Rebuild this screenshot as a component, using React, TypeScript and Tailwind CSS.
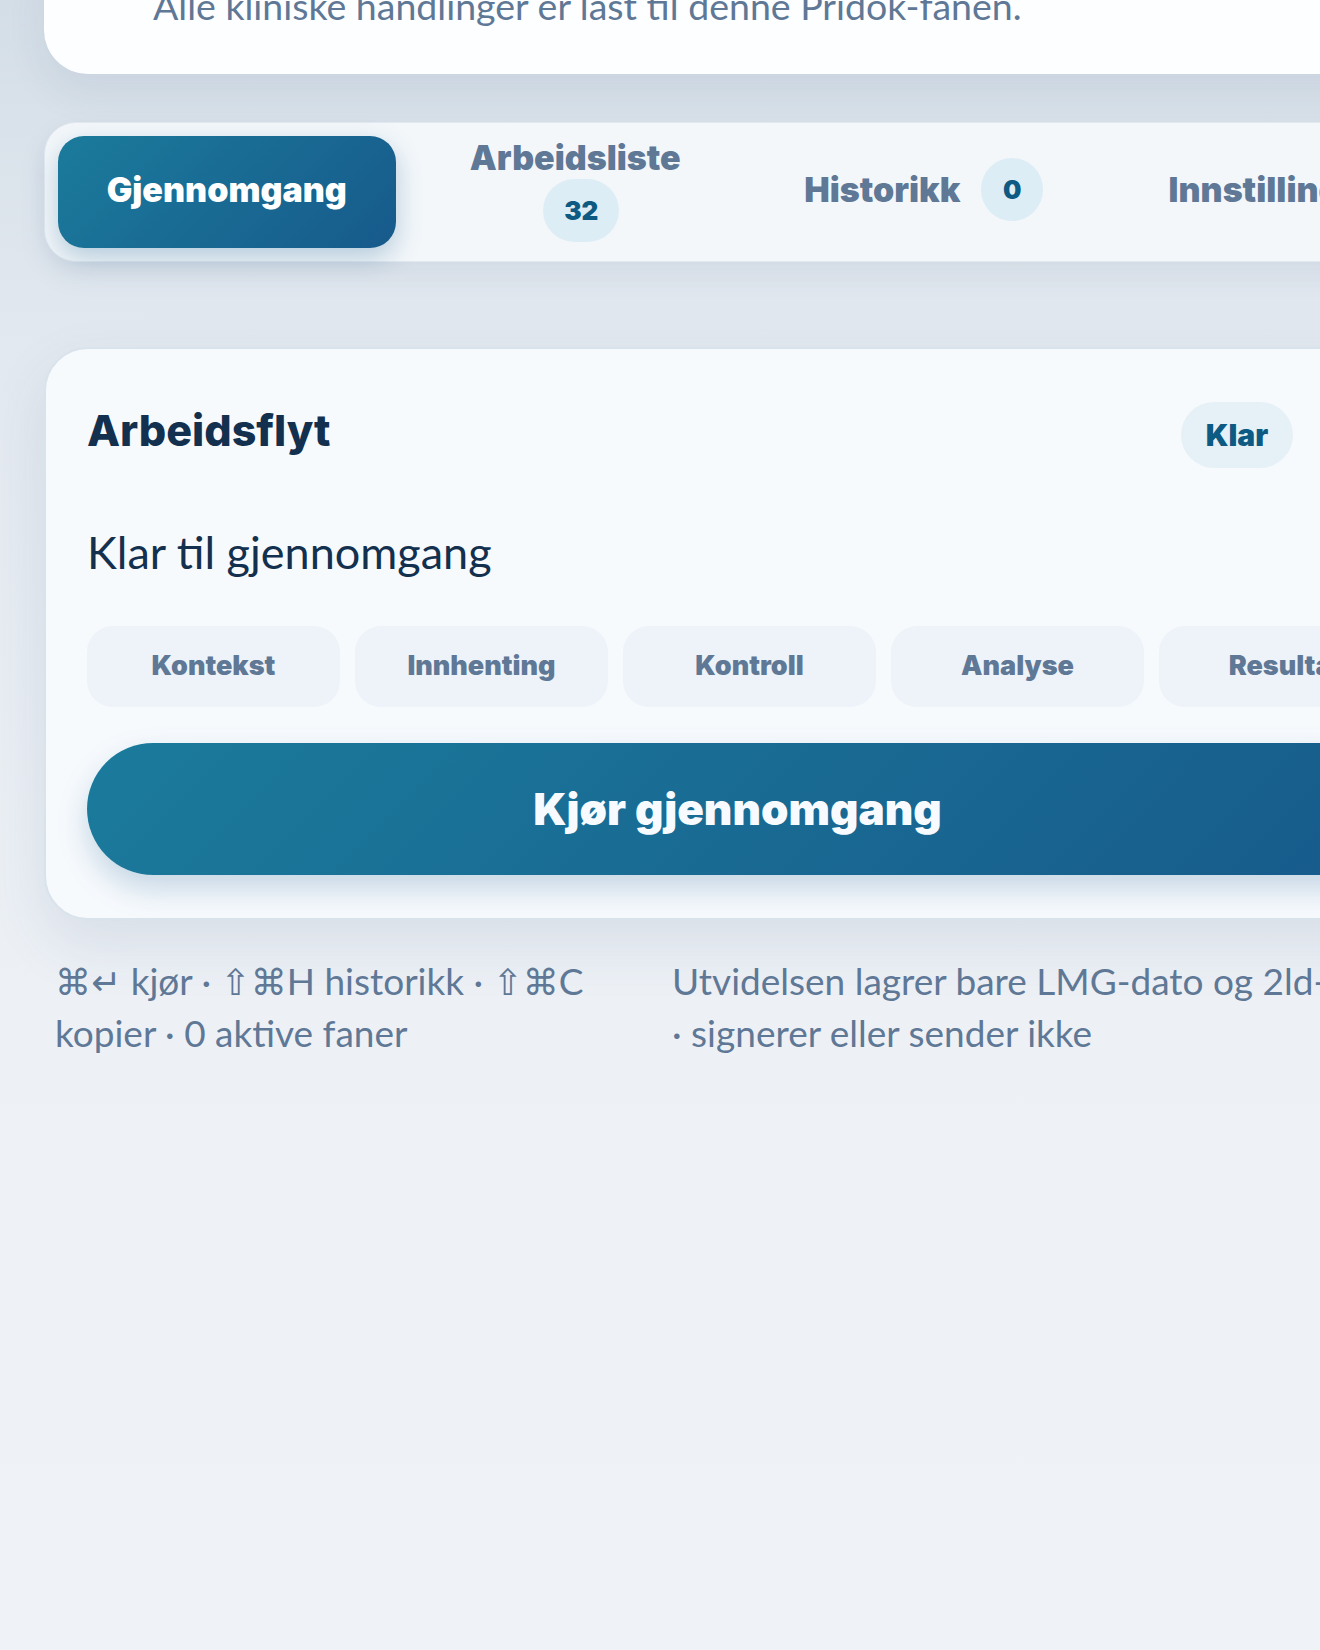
import type { ReactNode } from 'react'

const stages = ['Kontekst', 'Innhenting', 'Kontroll', 'Analyse', 'Resultat']

const heavy = "font-['Inter','Lato','Liberation_Sans',sans-serif] font-black"

function Badge({ children, className = '' }: { children: ReactNode; className?: string }) {
  return (
    <span
      className={`${heavy} inline-flex h-[63px] min-w-[62px] items-center justify-center rounded-full bg-[#ddedf5] px-[21px] text-[26px] text-[#0d5a82] ${className}`}
    >
      {children}
    </span>
  )
}

function Key({ children }: { children: ReactNode }) {
  return <span className="font-['DejaVu_Sans',sans-serif] text-[36px] leading-none">{children}</span>
}

export default function App() {
  return (
    <div className="min-h-[1650px] w-full overflow-hidden bg-[linear-gradient(180deg,#d4dee7_0px,#e3e9f0_360px,#edf1f6_1000px,#eff2f7_1650px)] font-['Lato','Liberation_Sans',sans-serif]">
      <div className="ml-[44px] w-[1411px]">
        {/* locked notice, scrolled mostly out of view */}
        <div className="-mt-[60px] rounded-[44px] bg-[#fdfeff] pt-[41px] pr-10 pb-[43px] pl-[109px] shadow-[0_18px_40px_rgba(40,70,110,0.08)]">
          <p className="text-[37.5px] leading-[50px] text-[#5f7896]">
            Alle kliniske handlinger er låst til denne Pridok-fanen.
          </p>
        </div>

        {/* tabs */}
        <nav className="mt-[48px] grid grid-cols-4 gap-[11px] rounded-[32px] border border-[#e2e9f0] bg-[#f3f7fa] p-[13px] shadow-[0_12px_30px_rgba(40,70,110,0.07)]">
          <button
            className={`${heavy} h-[112px] rounded-[26px] bg-[linear-gradient(135deg,#1b7b9c,#175a8b)] pb-[6px] text-[34px] text-white shadow-[0_10px_26px_rgba(23,90,139,0.28)]`}
          >
            Gjennomgang
          </button>
          <button className="flex h-[112px] flex-col items-center justify-center gap-[4px] pb-[2px]">
            <span className={`${heavy} text-[34px] leading-[34px] text-[#5f7896]`}>Arbeidsliste</span>
            <Badge className="ml-[12px]">32</Badge>
          </button>
          <button className="flex h-[112px] items-center justify-center gap-[21px] pb-[6px]">
            <span className={`${heavy} text-[34px] text-[#5f7896]`}>Historikk</span>
            <Badge className="px-0">0</Badge>
          </button>
          <button className={`${heavy} h-[112px] pb-[6px] text-[34px] text-[#5f7896]`}>Innstillinger</button>
        </nav>

        {/* workflow card */}
        <section className="mt-[85px] rounded-[44px] border-2 border-[#d9e3ec] bg-[#f7fafd] px-[41px] pt-[53px] pb-[43px] shadow-[0_24px_60px_rgba(40,70,110,0.10)]">
          <div className="flex h-[66px] items-center justify-between pr-[119px]">
            <h2 className={`${heavy} mb-[10px] !font-extrabold text-[43px] leading-none text-[#13304f]`}>Arbeidsflyt</h2>
            <span
              className={`${heavy} inline-flex h-[66px] w-[112px] items-center justify-center rounded-full bg-[#e5f1f7] text-[30px] text-[#0d5a82]`}
            >
              Klar
            </span>
          </div>

          <p className="mt-[59px] text-[45px] leading-[50px] text-[#13304f]">Klar til gjennomgang</p>

          <div className="mt-[49px] grid grid-cols-5 gap-[15px]">
            {stages.map((s) => (
              <div
                key={s}
                className={`${heavy} flex h-[81px] items-center justify-center rounded-[26px] bg-[#eef3f9] text-[27px] text-[#5f7896]`}
              >
                {s}
              </div>
            ))}
          </div>

          <button
            className={`${heavy} mt-[36px] flex h-[132px] w-full items-center justify-center rounded-full bg-[linear-gradient(135deg,#1b7b9c,#175a8b)] pr-[24px] text-[44px] text-[#f7fbff] shadow-[0_14px_30px_rgba(23,90,139,0.22)]`}
          >
            Kjør gjennomgang
          </button>
        </section>

        {/* footer hints */}
        <footer className="mt-[35px] grid grid-cols-[585px_1fr] gap-8 pl-[11px] text-[37px] leading-[52px] text-[#5f7896]">
          <p>
            <Key>⌘↵</Key> kjør · <Key>⇧⌘</Key>H historikk · <Key>⇧⌘</Key>C
            <br />
            kopier · 0 aktive faner
          </p>
          <p>
            Utvidelsen lagrer bare LMG-dato og 2ld-nr
            <br />· signerer eller sender ikke
          </p>
        </footer>
      </div>
    </div>
  )
}
